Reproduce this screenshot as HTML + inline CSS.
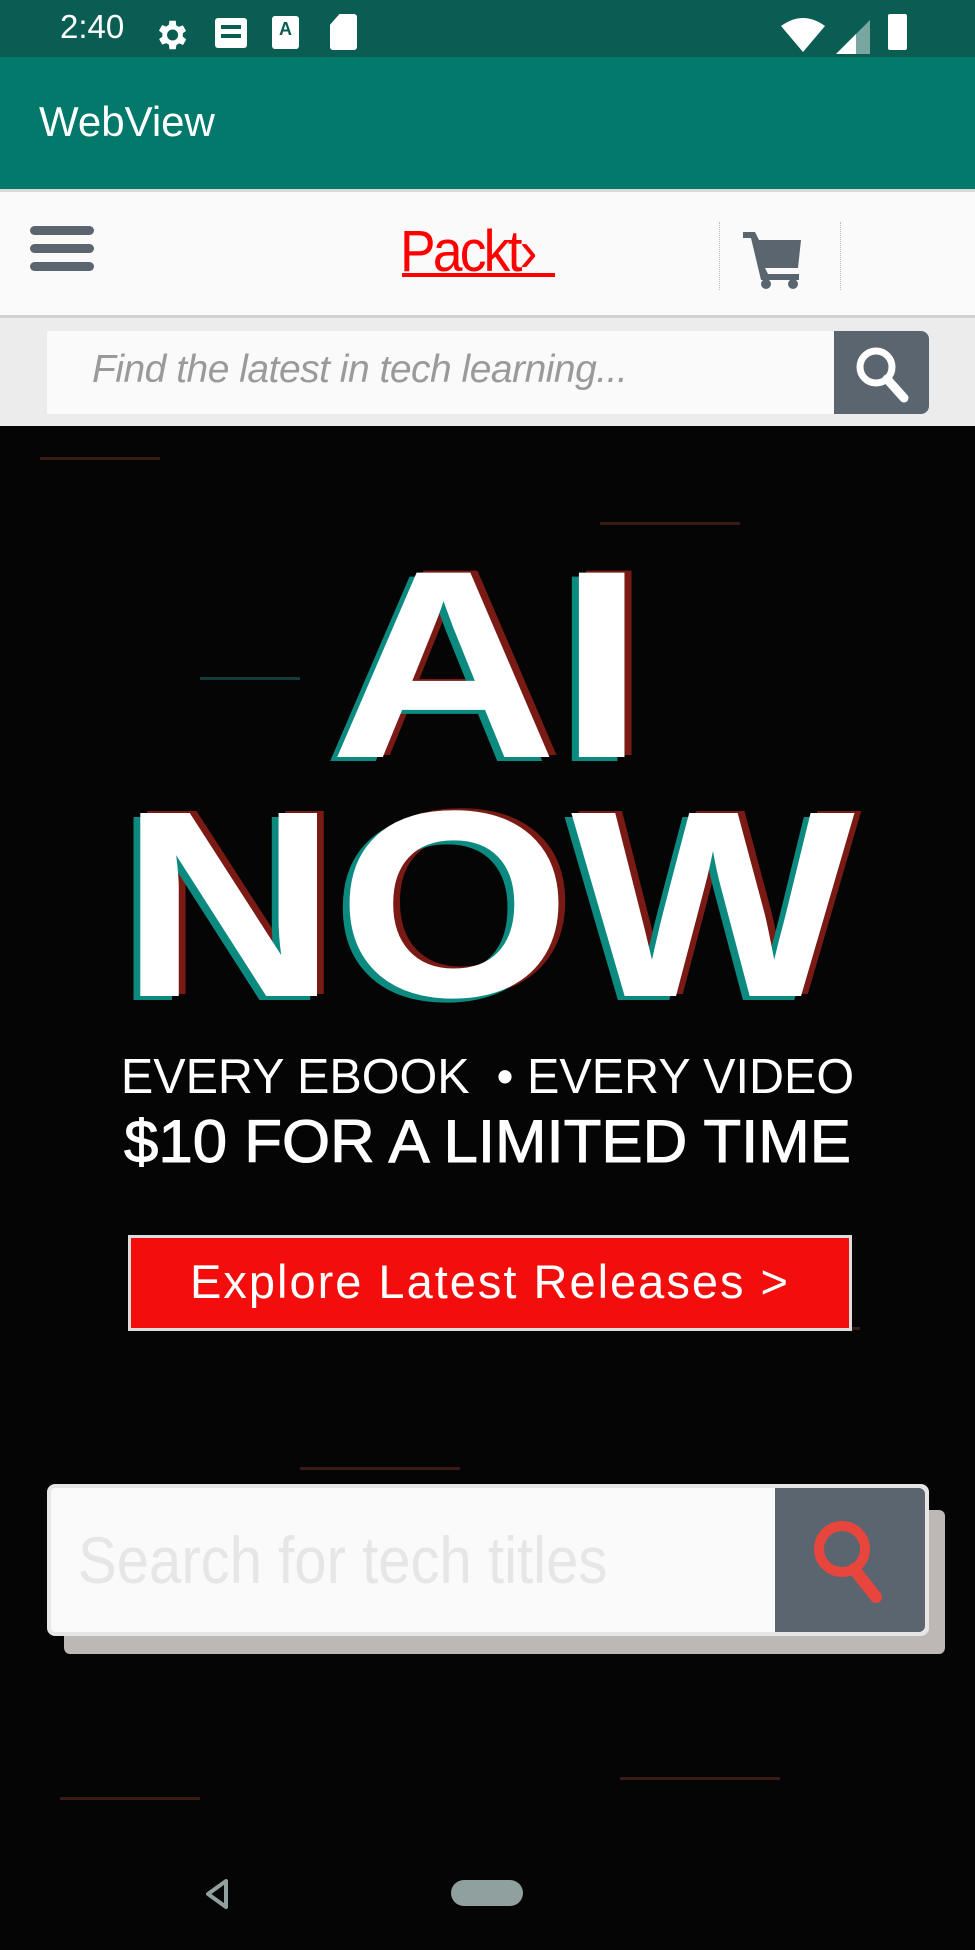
<!DOCTYPE html>
<html><head><meta charset="utf-8"><style>
*{margin:0;padding:0;box-sizing:border-box}
body{width:975px;height:1950px;overflow:hidden;background:#050505;font-family:"Liberation Sans",sans-serif;position:relative}
.abs{position:absolute}
</style></head><body>
<!-- status bar -->
<div class="abs" style="left:0;top:0;width:975px;height:57px;background:#0a5d53"></div>
<div class="abs" style="left:60px;top:8px;color:#fff;font-size:33px;">2:40</div>
<svg class="abs" style="left:152px;top:16px" width="38" height="38" viewBox="0 0 24 24"><path fill="#fff" d="M19.4 13a7.5 7.5 0 0 0 0-2l2.1-1.6-2-3.5-2.5 1a7 7 0 0 0-1.7-1L15 3h-4l-.4 2.7a7 7 0 0 0-1.7 1l-2.5-1-2 3.5L6.6 11a7.5 7.5 0 0 0 0 2l-2.1 1.6 2 3.5 2.5-1a7 7 0 0 0 1.7 1L11 21h4l.4-2.7a7 7 0 0 0 1.7-1l2.5 1 2-3.5zM13 15.5a3.5 3.5 0 1 1 0-7 3.5 3.5 0 0 1 0 7z"/></svg>
<div class="abs" style="left:215px;top:18px;width:32px;height:30px;background:#fff;border-radius:3px"><div style="margin:7px 6px;height:4px;background:#0a5d53"></div><div style="margin:-2px 6px;height:4px;background:#0a5d53"></div></div>
<div class="abs" style="left:272px;top:16px;width:27px;height:33px;background:#fff;border-radius:3px;color:#0a5d53;font-weight:bold;font-size:18px;text-align:center;line-height:26px">A</div>
<div class="abs" style="left:330px;top:14px;width:27px;height:36px;background:#fff;border-radius:3px;clip-path:polygon(35% 0,100% 0,100% 100%,0 100%,0 30%)"></div>
<svg class="abs" style="left:780px;top:18px" width="46" height="34" viewBox="0 0 46 34"><path fill="#fff" d="M1 8 Q23 -8 45 8 L23 34Z"/></svg>
<svg class="abs" style="left:836px;top:20px" width="34" height="34"><path fill="#fff" d="M34 0V34H0Z" opacity=".45"/><path fill="#fff" d="M20 14V34H0Z"/></svg>
<div class="abs" style="left:888px;top:14px;width:19px;height:36px;background:#fff;border-radius:2px"></div>
<!-- app bar -->
<div class="abs" style="left:0;top:57px;width:975px;height:132px;background:#02796b"></div>
<div class="abs" style="left:39px;top:98px;color:#fff;font-size:42px;">WebView</div>
<!-- header -->
<div class="abs" style="left:0;top:189px;width:975px;height:129px;background:#fafafa;border-top:3px solid #d8d8d8;border-bottom:3px solid #d0d0d0"></div>
<div class="abs" style="left:30px;top:226px;width:64px;height:9px;background:#5a6570;border-radius:5px"></div>
<div class="abs" style="left:30px;top:244px;width:64px;height:9px;background:#5a6570;border-radius:5px"></div>
<div class="abs" style="left:30px;top:262px;width:64px;height:9px;background:#5a6570;border-radius:5px"></div>
<div class="abs" style="left:400px;top:218px;color:#f00;font-size:58px;letter-spacing:-3px;transform:scaleX(0.92);transform-origin:left">Packt›</div>
<div class="abs" style="left:402px;top:273px;width:153px;height:4px;background:#f00"></div>
<div class="abs" style="left:719px;top:222px;height:68px;border-left:1px dotted #bbb"></div>
<div class="abs" style="left:840px;top:222px;height:68px;border-left:1px dotted #bbb"></div>
<svg class="abs" style="left:743px;top:232px" width="60" height="58" viewBox="0 0 60 58"><path fill="#5a6570" d="M0 0H12L16 8H58L55 36H22L25 42H56V48H18L8 6H0Z"/><circle cx="23" cy="52" r="5" fill="#5a6570"/><circle cx="50" cy="52" r="5" fill="#5a6570"/></svg>
<!-- search band -->
<div class="abs" style="left:0;top:318px;width:975px;height:108px;background:#ececec"></div>
<div class="abs" style="left:47px;top:331px;width:790px;height:83px;background:#fafafa"></div>
<div class="abs" style="left:92px;top:348px;color:#9a9a9a;font-size:39px;font-style:italic;letter-spacing:-0.5px">Find the latest in tech learning...</div>
<div class="abs" style="left:834px;top:331px;width:95px;height:83px;background:#5a6570;border-radius:0 8px 8px 0"></div>
<svg class="abs" style="left:852px;top:343px" width="60" height="62" viewBox="0 0 60 62"><circle cx="24" cy="24" r="16" fill="none" stroke="#fff" stroke-width="7"/><path d="M35 36L52 55" stroke="#fff" stroke-width="9" stroke-linecap="round"/></svg>
<!-- hero -->
<div class="abs" style="left:0;top:427px;width:975px;height:1440px;background:#050505;overflow:hidden">
<div class="abs" style="left:40px;top:30px;width:120px;height:3px;background:#3a1a14"></div>
<div class="abs" style="left:600px;top:95px;width:140px;height:3px;background:#3a1a14"></div>
<div class="abs" style="left:200px;top:250px;width:100px;height:3px;background:#123c3a"></div>
<div class="abs" style="left:700px;top:900px;width:160px;height:3px;background:#3a1a14"></div>
<div class="abs" style="left:300px;top:1040px;width:160px;height:3px;background:#3a1a14"></div>
<div class="abs" style="left:60px;top:1370px;width:140px;height:3px;background:#3a1a14"></div>
<div class="abs" style="left:620px;top:1350px;width:160px;height:3px;background:#3a1a14"></div>
</div>
<div class="abs" style="left:0;top:530px;width:975px;text-align:center;color:#fff;font-weight:bold;font-size:268px;line-height:268px;text-shadow:-6px 4px 0 #0d8a80,6px -2px 0 #7a1a14;transform:scaleX(1.18)">AI</div>
<div class="abs" style="left:0;top:772px;width:975px;text-align:center;color:#fff;font-weight:bold;font-size:266px;line-height:266px;text-shadow:-6px 4px 0 #0d8a80,6px -2px 0 #7a1a14;transform:scaleX(1.13)">NOW</div>
<div class="abs" style="left:0;top:1050px;width:975px;text-align:center;color:#fff;font-size:49px;line-height:54px;transform:scaleX(0.99)">EVERY EBOOK &nbsp;• EVERY VIDEO</div>
<div class="abs" style="left:0;top:1110px;width:975px;text-align:center;color:#fff;font-size:60px;line-height:64px;transform:scaleX(1.03);-webkit-text-stroke:1px #fff">$10 FOR A LIMITED TIME</div>
<div class="abs" style="left:128px;top:1235px;width:724px;height:96px;background:#f40d0d;border:3px solid #ddd;color:#fff;font-size:47px;line-height:88px;text-align:center;letter-spacing:2px">Explore Latest Releases &gt;</div>
<!-- bottom search -->
<div class="abs" style="left:64px;top:1510px;width:881px;height:144px;background:#bdb7b5;border-radius:6px"></div>
<div class="abs" style="left:47px;top:1484px;width:882px;height:152px;background:#fafafa;border:4px solid #e6e6e6;border-radius:8px"></div>
<div class="abs" style="left:78px;top:1522px;color:#e6e6e6;font-size:66px;white-space:nowrap;width:653px;overflow:hidden;transform:scaleX(0.88);transform-origin:left">Search for tech titles</div>
<div class="abs" style="left:775px;top:1488px;width:150px;height:144px;background:#5a6570;border-radius:0 6px 6px 0"></div>
<svg class="abs" style="left:808px;top:1517px" width="80" height="90" viewBox="0 0 80 90"><circle cx="34" cy="32" r="23" fill="none" stroke="#e8453c" stroke-width="10"/><path d="M46 52L68 80" stroke="#e8453c" stroke-width="12" stroke-linecap="round"/></svg>
<!-- nav -->
<svg class="abs" style="left:204px;top:1878px" width="26" height="32" viewBox="0 0 26 32"><path d="M22 3L4 16L22 29Z" fill="none" stroke="#8fa09e" stroke-width="4" stroke-linejoin="round"/></svg>
<div class="abs" style="left:451px;top:1880px;width:72px;height:26px;background:#8fa09e;border-radius:13px"></div>
</body></html>
